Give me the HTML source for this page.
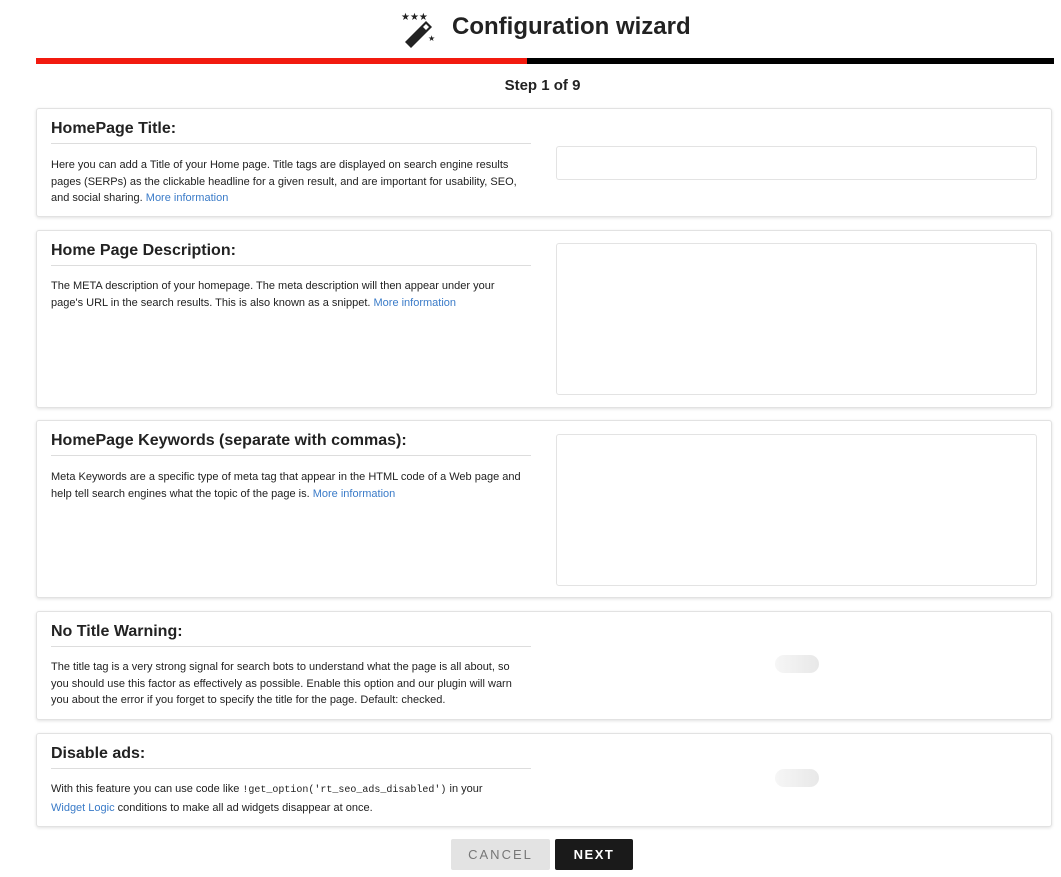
<!DOCTYPE html><html><head><style>
body{margin:0;width:1061px;height:877px;background:#fff;font-family:"Liberation Sans",sans-serif;color:#222;position:relative;overflow:hidden}
.a{position:absolute}
.p{position:absolute;left:36px;width:1014px;border:1px solid #e2e2e2;border-radius:3px;box-shadow:0 1px 3px rgba(0,0,0,.12);background:#fff}
.h{position:absolute;left:14px;top:10px;width:480px;font-size:16px;line-height:20px;font-weight:bold;padding-bottom:4px;border-bottom:1px solid #ddd;color:#222}
.d{position:absolute;left:14px;width:475px;font-size:11px;line-height:16.5px;color:#222}
.d a{color:#3a7bc8;text-decoration:none}
.in{position:absolute;left:519px;width:479px;border:1px solid #e3e3e3;border-radius:3px}
.tg{position:absolute;left:738px;width:44px;height:18px;border-radius:9px;background:linear-gradient(90deg,#f6f6f6,#e8e8e8)}
code{font-family:"Liberation Mono",monospace;font-size:10px}
</style></head><body>
<svg class="a" style="left:400px;top:10px" width="40" height="40" viewBox="0 0 40 40"><g fill="#222"><path d="M26 11l6 6-21 21-6-6z"/><text x="1" y="10" font-size="10">★★★</text><text x="28" y="31" font-size="8">★</text></g><path d="M26 14l3 3-3 3-3-3z" fill="#fff"/></svg>
<div class="a" style="left:452px;top:13px;font-size:24px;font-weight:bold;color:#222">Configuration wizard</div>
<div class="a" style="left:36px;top:58px;width:491px;height:6px;background:#f21a0f"></div>
<div class="a" style="left:527px;top:58px;width:527px;height:6px;background:#000"></div>
<div class="a" style="left:0;width:1085px;top:77px;text-align:center;font-size:15px;font-weight:bold">Step 1 of 9</div>

<div class="p" style="top:108px;height:107px">
<div class="h">HomePage Title:</div>
<div class="d" style="top:48px">Here you can add a Title of your Home page. Title tags are displayed on search engine results pages (SERPs) as the clickable headline for a given result, and are important for usability, SEO, and social sharing. <a>More information</a></div>
<div class="in" style="top:37px;height:32px"></div></div>

<div class="p" style="top:230px;height:176px">
<div class="h">Home Page Description:</div>
<div class="d" style="top:47px">The META description of your homepage. The meta description will then appear under your page's URL in the search results. This is also known as a snippet. <a>More information</a></div>
<div class="in" style="top:12px;height:150px"></div></div>

<div class="p" style="top:420px;height:176px">
<div class="h">HomePage Keywords (separate with commas):</div>
<div class="d" style="top:48px">Meta Keywords are a specific type of meta tag that appear in the HTML code of a Web page and help tell search engines what the topic of the page is. <a>More information</a></div>
<div class="in" style="top:13px;height:150px"></div></div>

<div class="p" style="top:611px;height:107px">
<div class="h">No Title Warning:</div>
<div class="d" style="top:47px">The title tag is a very strong signal for search bots to understand what the page is all about, so you should use this factor as effectively as possible. Enable this option and our plugin will warn you about the error if you forget to specify the title for the page. Default: checked.</div>
<div class="tg" style="top:43px"></div></div>

<div class="p" style="top:733px;height:92px">
<div class="h">Disable ads:</div>
<div class="d" style="top:47px;width:490px">With this feature you can use code like <code>!get_option('rt_seo_ads_disabled')</code> in your<br><a>Widget Logic</a> conditions to make all ad widgets disappear at once.</div>
<div class="tg" style="top:35px"></div></div>

<div class="a" style="left:451px;top:839px;width:99px;height:31px;background:#e3e3e3;border-radius:2px;color:#777;font-size:13px;letter-spacing:2px;text-align:center;line-height:31px">CANCEL</div>
<div class="a" style="left:555px;top:839px;width:78px;height:31px;background:#1a1a1a;border-radius:2px;color:#fff;font-weight:bold;font-size:13px;letter-spacing:1.5px;text-align:center;line-height:31px">NEXT</div>
</body></html>
